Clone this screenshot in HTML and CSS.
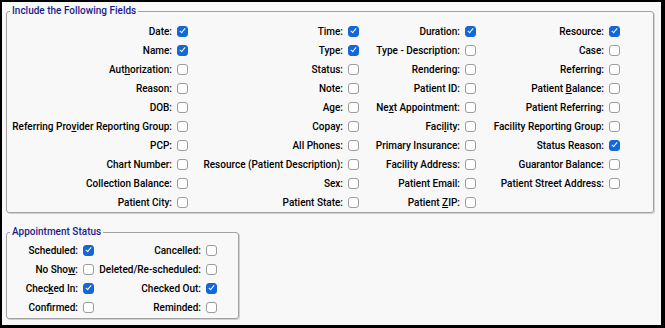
FILE: index.html
```html
<!DOCTYPE html>
<html lang="en">
<head>
  <meta charset="UTF-8">
  <meta name="viewport" content="width=device-width, initial-scale=1.0">
  <title>Report Options</title>
  <link rel="stylesheet" href="styles.css">
</head>
<body>
  <div class="window">
    <fieldset class="group fields">
      <legend>Include the Following Fields</legend>
      <div class="grid fields-grid">
        <span class="lbl">Date:</span><span class="cb on"></span>
        <span class="lbl">Time:</span><span class="cb on"></span>
        <span class="lbl">Duration:</span><span class="cb on"></span>
        <span class="lbl">Resource:</span><span class="cb on"></span>

        <span class="lbl">Name:</span><span class="cb on"></span>
        <span class="lbl">Type:</span><span class="cb on"></span>
        <span class="lbl">Type - Description:</span><span class="cb"></span>
        <span class="lbl">Case:</span><span class="cb"></span>

        <span class="lbl">Aut<u>h</u>orization:</span><span class="cb"></span>
        <span class="lbl">Status:</span><span class="cb"></span>
        <span class="lbl">Rendering:</span><span class="cb"></span>
        <span class="lbl">Referring:</span><span class="cb"></span>

        <span class="lbl">Reason:</span><span class="cb"></span>
        <span class="lbl">Note:</span><span class="cb"></span>
        <span class="lbl">Patient ID:</span><span class="cb"></span>
        <span class="lbl">Patient <u>B</u>alance:</span><span class="cb"></span>

        <span class="lbl">DOB:</span><span class="cb"></span>
        <span class="lbl">Age:</span><span class="cb"></span>
        <span class="lbl">Ne<u>x</u>t Appointment:</span><span class="cb"></span>
        <span class="lbl">Patient Referring:</span><span class="cb"></span>

        <span class="lbl">Referring Pro<u>v</u>ider Reporting Group:</span><span class="cb"></span>
        <span class="lbl">Copay:</span><span class="cb"></span>
        <span class="lbl">Faci<u>l</u>ity:</span><span class="cb"></span>
        <span class="lbl">Facility Reporting Group:</span><span class="cb"></span>

        <span class="lbl">PCP:</span><span class="cb"></span>
        <span class="lbl">All Phones:</span><span class="cb"></span>
        <span class="lbl">Primary Insurance:</span><span class="cb"></span>
        <span class="lbl">Status Reason:</span><span class="cb on"></span>

        <span class="lbl">Chart Number:</span><span class="cb"></span>
        <span class="lbl">Resource (Patient Description):</span><span class="cb"></span>
        <span class="lbl">Facility Address:</span><span class="cb"></span>
        <span class="lbl">Guarantor Balance:</span><span class="cb"></span>

        <span class="lbl">Collection Balance:</span><span class="cb"></span>
        <span class="lbl">Sex:</span><span class="cb"></span>
        <span class="lbl">Patient Email:</span><span class="cb"></span>
        <span class="lbl">Patient Street Address:</span><span class="cb"></span>

        <span class="lbl">Patient City:</span><span class="cb"></span>
        <span class="lbl">Patient State:</span><span class="cb"></span>
        <span class="lbl">Patient <u>Z</u>IP:</span><span class="cb"></span>
      </div>
    </fieldset>

    <fieldset class="group status">
      <legend>Appointment Status</legend>
      <div class="grid status-grid">
        <span class="lbl">Scheduled:</span><span class="cb on"></span>
        <span class="lbl">Cancelled:</span><span class="cb"></span>

        <span class="lbl">No Sho<u>w</u>:</span><span class="cb"></span>
        <span class="lbl">Deleted/Re-scheduled:</span><span class="cb"></span>

        <span class="lbl">Chec<u>k</u>ed In:</span><span class="cb on"></span>
        <span class="lbl">Checked Out:</span><span class="cb on"></span>

        <span class="lbl">Confirmed:</span><span class="cb"></span>
        <span class="lbl">Reminded:</span><span class="cb"></span>
      </div>
    </fieldset>
  </div>
</body>
</html>
```

FILE: styles.css
```css
html, body {
  margin: 0;
  height: 100%;
  background: #000;
}
body {
  font-family: Roboto, 'Liberation Sans', Arial, sans-serif;
  font-size: 10px;
  font-weight: 500;
  color: #000;
}
.window {
  box-sizing: border-box;
  margin: 2px 4px 0 2px;
  height: 323px;
  padding: 3px 7px 0 4px;
  background: #f8f8f8;
}
.group {
  margin: 0;
  padding: 0;
  min-width: 0;
  border: 1px solid #a2a2a2;
  border-radius: 3px;
  box-shadow: 1px 1px 0 #d2d2d2;
}
.group legend {
  margin-left: 3px;
  padding: 0 2px;
  line-height: 12px;
  color: #1c1c8c;
}
.grid {
  display: grid;
  grid-auto-rows: 19px;
  align-items: center;
}
.fields {
  padding: 5px 0 0 0;
}
.fields-grid {
  grid-template-columns: 170px 11px 160px 11px 106px 11px 133px 11px;
}
.status {
  width: 233px;
  box-sizing: border-box;
  margin-top: 13px;
  padding: 3px 0 1px 0;
}
.status-grid {
  grid-template-columns: 76px 11px 112px 11px;
}
.lbl {
  text-align: right;
  padding-right: 5px;
  white-space: nowrap;
  line-height: 19px;
}
.lbl u {
  text-underline-offset: 1px;
}
.cb {
  position: relative;
  box-sizing: border-box;
  width: 11px;
  height: 11px;
  border: 1px solid #9c9c9c;
  border-radius: 3px;
  background: #fff;
}
.cb.on {
  border-color: #1467d6;
  background: #1467d6;
}
.cb.on::after {
  content: "";
  position: absolute;
  left: 3px;
  top: 0px;
  width: 2px;
  height: 5px;
  border-right: 1.5px solid #fff;
  border-bottom: 1.5px solid #fff;
  transform: rotate(40deg);
}
```
